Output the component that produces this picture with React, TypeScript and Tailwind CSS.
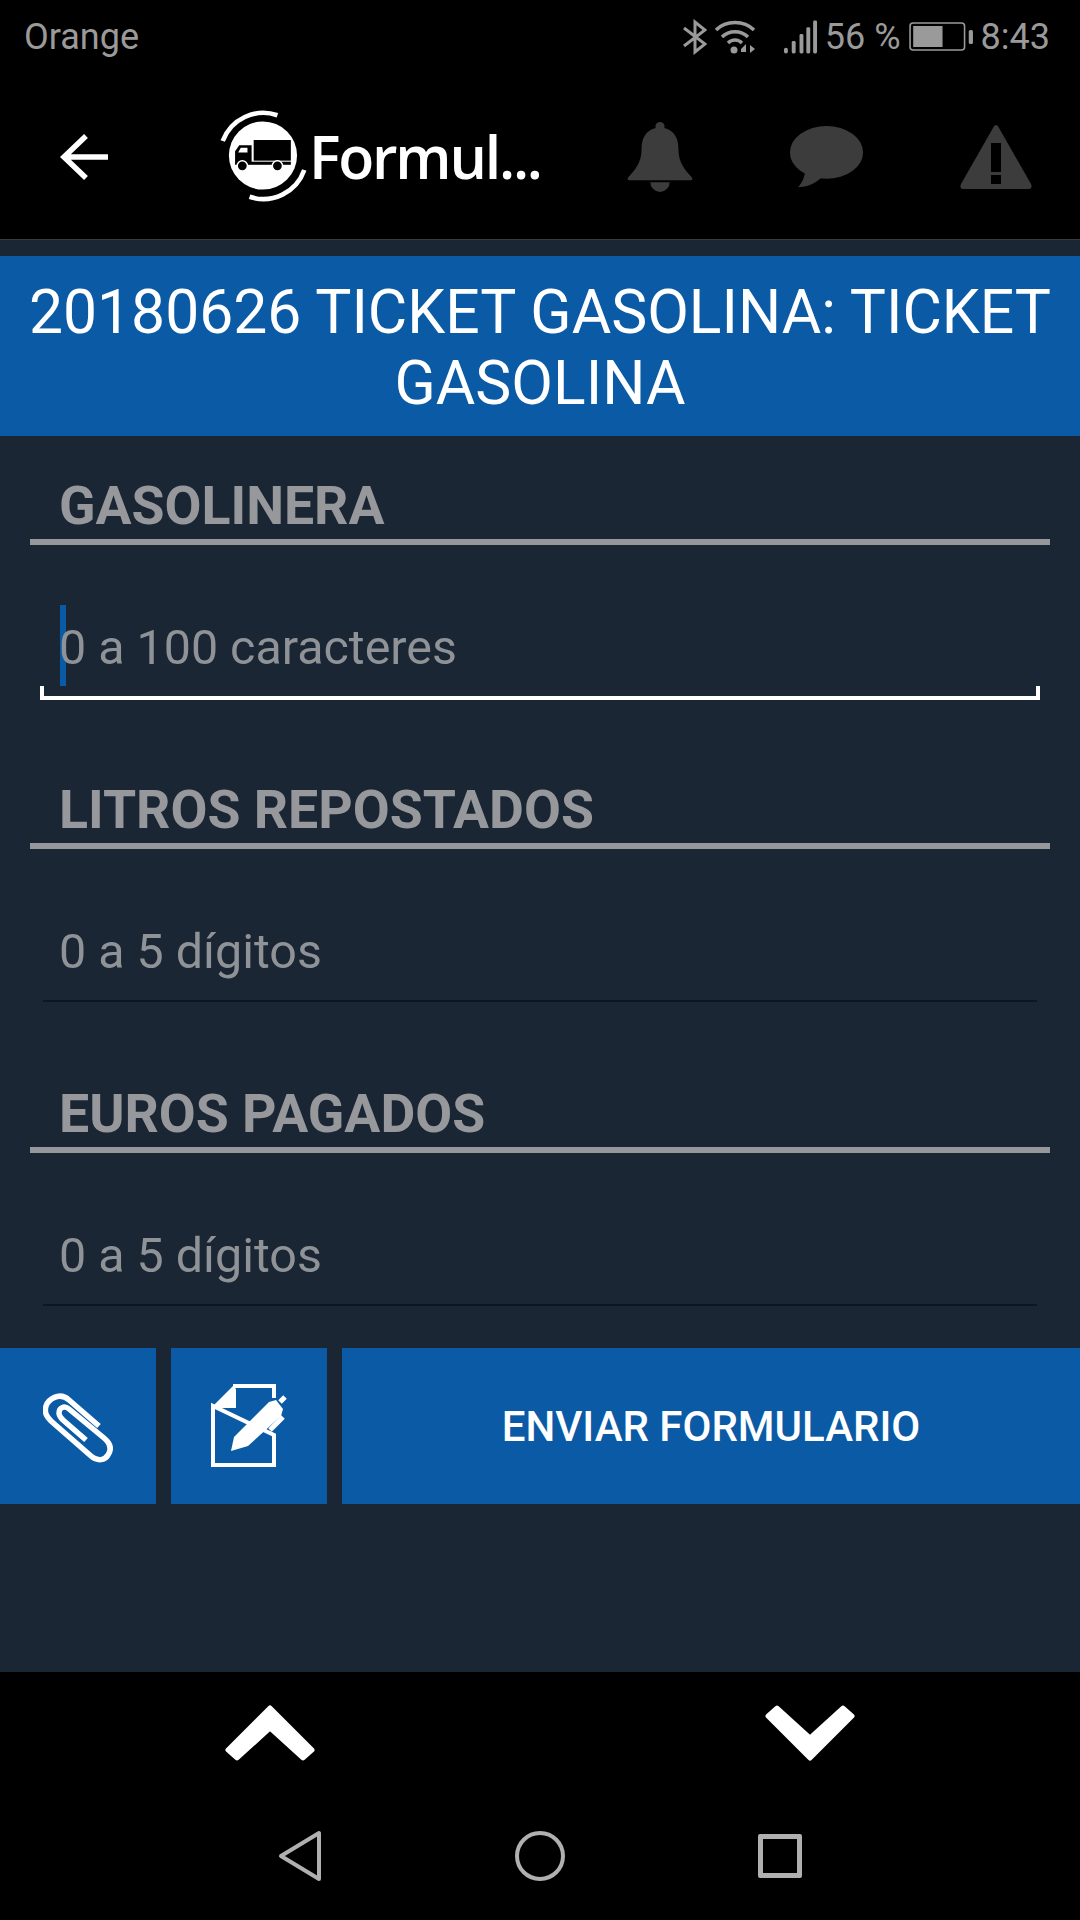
const roboto = "font-['Roboto',sans-serif]";

const StatusBar = () => (
  <div className={`h-[74px] flex items-center justify-between pl-[24px] pr-[30px] text-[#9a9a9a] text-[36px] ${roboto}`}>
    <span>Orange</span>
    <div className="flex items-center">
      <svg width="25" height="36" viewBox="0 0 25 36" className="mr-[6px]">
        <path d="M2 9 L23 25 L13 33 L13 3 L23 11 L2 27" fill="none" stroke="#9a9a9a" strokeWidth="3" />
      </svg>
      <svg width="45" height="36" viewBox="0 0 43 36" className="mr-[25px]">
        <path d="M2 11 C12 1 30 1 40 11 M8 18 C15 11 27 11 34 18 M14 24 C18 20 24 20 28 24" fill="none" stroke="#9a9a9a" strokeWidth="3.5" />
        <circle cx="20" cy="31" r="3.5" fill="#9a9a9a" />
        <path d="M27 33h5v-8l-5 5zM36 26l5 4-5 4z" fill="#9a9a9a" />
      </svg>
      <svg width="35" height="36" viewBox="0 0 36 36" className="mr-[7px]">
        <rect x="1" y="29" width="4" height="6" rx="2" fill="#9a9a9a" />
        <rect x="9" y="22" width="4" height="13" rx="1.5" fill="#9a9a9a" />
        <rect x="17" y="15" width="4" height="20" rx="1.5" fill="#9a9a9a" />
        <rect x="24" y="8" width="4" height="27" rx="1.5" fill="#9a9a9a" />
        <rect x="31" y="1" width="4" height="34" rx="1.5" fill="#9a9a9a" />
      </svg>
      <span className="mr-[8px]">56 %</span>
      <svg width="65" height="30" viewBox="0 0 62 30" preserveAspectRatio="none" className="mr-[7px]">
        <rect x="1" y="1" width="52" height="27" rx="3" fill="none" stroke="#9a9a9a" strokeWidth="1.5" />
        <rect x="4" y="4" width="28" height="21" fill="#9a9a9a" />
        <rect x="57" y="8" width="4" height="14" rx="1.5" fill="#9a9a9a" />
      </svg>
      <span>8:43</span>
    </div>
  </div>
);

const TopBar = () => (
  <div className="h-[166px] flex items-center border-b border-[#3a3a3a] box-border pl-[59px] pr-[48px]">
    <svg width="51" height="48" viewBox="0 0 51 48" className="mr-[108px]">
      <path d="M49 24 H5 M27 3 L5 24 L27 45" fill="none" stroke="#fff" strokeWidth="5.500" />
    </svg>
    <svg width="92" height="95" viewBox="0 0 88 92" className="-mt-[2px]">
      <circle cx="43" cy="46" r="33" fill="#fff" />
      <path d="M4 32 A42 42 0 0 1 57 7" fill="none" stroke="#fff" strokeWidth="4.500" />
      <path d="M83 60 A42 42 0 0 1 30 86" fill="none" stroke="#fff" strokeWidth="4.500" />
      <rect x="34" y="31" width="36" height="20" fill="#000" />
      <path d="M16 53 V42 L20 36 H32 V53 Z M19 43 H28 V38.500 H21.500 Z" fill="#000" fillRule="evenodd" />
      <rect x="16" y="52" width="54" height="3" fill="#000" />
      <circle cx="23" cy="56" r="5" fill="#000" stroke="#fff" strokeWidth="1.500" />
      <circle cx="57" cy="56" r="5" fill="#000" stroke="#fff" strokeWidth="1.500" />
    </svg>
    <span className="font-['Open_Sans',sans-serif] font-semibold text-[59px] text-white -ml-[1px] tracking-[-2.2px]">Formul...</span>
    <div className="ml-auto w-[405px] flex items-center justify-between">
      <svg width="66" height="72" viewBox="0 0 68 72">
        <path d="M34 0 a4.500 4.500 0 0 1 4.500 6 C50 9 53 18 53 28 C53 42 60 50 67 57 Q68 60 65 60 H3 Q0 60 1 57 C8 50 15 42 15 28 C15 18 18 9 29.500 6 A4.500 4.500 0 0 1 34 0 Z" fill="#3c3c3c" />
        <path d="M24 62 H44 A10 10 0 0 1 24 62 Z" fill="#3c3c3c" />
      </svg>
      <svg width="75" height="63" viewBox="0 0 72 62" className="mt-[1px]">
        <ellipse cx="36" cy="26" rx="36" ry="26" fill="#3c3c3c" />
        <path d="M15 42 C15 50 12 56 8 60 C16 61 26 56 32 50 Z" fill="#3c3c3c" />
      </svg>
      <svg width="72" height="64" viewBox="0 0 72 64">
        <path d="M36 0 Q38 0 39 3 L71 59 Q73 64 68 64 H4 Q-1 64 1 59 L33 3 Q34 0 36 0 Z" fill="#3c3c3c" />
        <rect x="31" y="18" width="10" height="29" fill="#000" />
        <rect x="31" y="50" width="10" height="9" fill="#000" />
      </svg>
    </div>
  </div>
);

const Field = ({ label, placeholder, focused }: { label: string; placeholder: string; focused?: boolean }) => (
  <div className={roboto}>
    <div className="pl-[59px] h-[63px] mb-[1px] flex items-end text-[53.6px] leading-[64px] font-bold text-[#96989b]">{label}</div>
    <div className="mx-[30px] h-[6px] bg-[#96989b]" />
    <div className="relative mx-[40px] h-[155px]">
      {focused && <div className="absolute left-[20px] top-[60px] h-[81px] w-[6px] bg-[#0a5aa6]" />}
      <div className="absolute left-[19px] top-[73px] text-[48.4px] leading-[60px] text-[#8f9296]">{placeholder}</div>
      {focused ? (
        <div className="absolute inset-x-0 top-[141px] h-[14px] border-x-[4px] border-b-[4px] border-white" />
      ) : (
        <div className="absolute inset-x-[3px] bottom-[2px] h-[2px] bg-[#0f1620]" />
      )}
    </div>
  </div>
);

const ActionBar = () => (
  <div className="h-[156px] flex gap-[15px] mt-[40px]">
    <button className="w-[156px] bg-[#0a5aa6] flex items-center justify-center">
      <svg width="70" height="76" viewBox="0 0 70 76">
        <path d="M56 38 L26 12 C16 3 5 12 3 18 C1 25 4 29 8 33 L48 68 C55 74 62 72 65 67 C69 61 67 55 61 50 L26 21 C21 17 16 20 16 25 C16 28 18 30 20 32 L43 52" fill="none" stroke="#fff" strokeWidth="5.500" />
      </svg>
    </button>
    <button className="w-[156px] bg-[#0a5aa6] flex items-center justify-center pl-[2px]">
      <svg width="78" height="84" viewBox="0 0 78 84">
        <path d="M22 2 H63 V14 M63 51 V81 H2 V22 Z" fill="none" stroke="#fff" strokeWidth="4" />
        <path d="M2 22 L22 2 L25 5 L25 24 L2 24 Z" fill="#fff" />
        <path d="M20 67 L23 53 L58 18 L65 16 L72 25 L70 32 L37 62 Z" fill="#fff" />
        <path d="M69 18 L74 13 M59 46 L72 33" stroke="#fff" strokeWidth="5" fill="none" />
      </svg>
    </button>
    <button className={`flex-1 bg-[#0a5aa6] text-white text-[42px] font-medium ${roboto}`}>ENVIAR FORMULARIO</button>
  </div>
);

const BottomBar = () => (
  <div className="bg-black h-[248px] flex flex-col">
    <div className="h-[126px] flex items-center justify-between px-[225px] pb-[4px]">
      <svg width="90" height="56" viewBox="0 0 90 56">
        <path d="M45 3 L87 45 L78 53 L45 23 L12 53 L3 45 Z" fill="#fff" stroke="#fff" strokeWidth="5" strokeLinejoin="round" />
      </svg>
      <svg width="90" height="56" viewBox="0 0 90 56">
        <path d="M45 53 L87 11 L78 3 L45 33 L12 3 L3 11 Z" fill="#fff" stroke="#fff" strokeWidth="5" strokeLinejoin="round" />
      </svg>
    </div>
    <div className="flex items-center justify-between px-[278px] pt-[32px]">
      <svg width="44" height="52" viewBox="0 0 44 52">
        <path d="M41 3 V49 L3 26 Z" fill="none" stroke="#b0b0b0" strokeWidth="4" strokeLinejoin="round" />
      </svg>
      <div className="w-[50px] h-[50px] rounded-full border-[4px] border-[#b0b0b0]" />
      <div className="w-[44px] h-[44px] rounded-[2px] border-[5px] border-[#b0b0b0]" />
    </div>
  </div>
);

export default function App() {
  return (
    <div className="w-[1080px] h-[1920px] bg-[#1b2634] flex flex-col">
      <div className="bg-black">
        <StatusBar />
        <TopBar />
      </div>
      <div className="h-[16px]" />
      <div className={`bg-[#0a5aa6] h-[180px] px-[20px] pt-[4px] flex items-center justify-center text-center text-white text-[60.6px] leading-[71px] ${roboto}`}>
        20180626 TICKET GASOLINA: TICKET GASOLINA
      </div>
      <div className="flex flex-col gap-[79px] mt-[39px]">
        <Field label="GASOLINERA" placeholder="0 a 100 caracteres" focused />
        <Field label="LITROS REPOSTADOS" placeholder="0 a 5 dígitos" />
        <Field label="EUROS PAGADOS" placeholder="0 a 5 dígitos" />
      </div>
      <ActionBar />
      <div className="flex-1" />
      <BottomBar />
    </div>
  );
}
